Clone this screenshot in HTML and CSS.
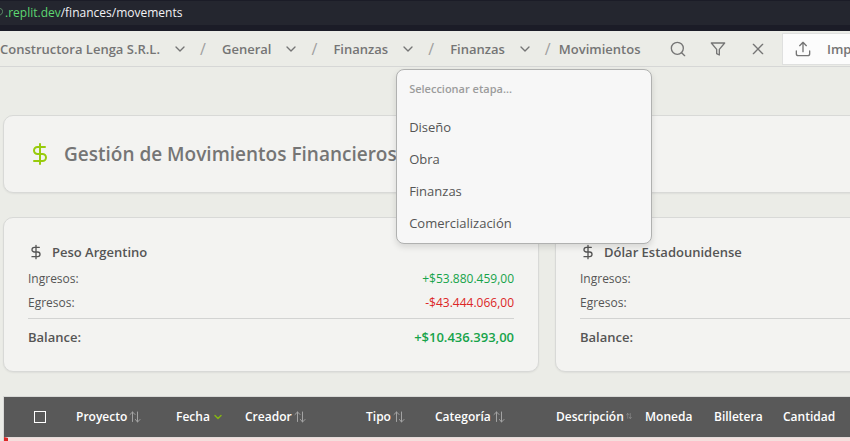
FILE: index.html
```html
<!DOCTYPE html>
<html lang="es">
<head>
<meta charset="utf-8">
<meta name="viewport" content="width=device-width, initial-scale=1">
<title>Movimientos</title>
<link rel="stylesheet" href="styles.css">
</head>
<body>
<svg class="defs" aria-hidden="true">
  <symbol id="chevron" viewBox="0 0 24 24"><path d="m6 9 6 6 6-6"/></symbol>
  <symbol id="dollar" viewBox="0 0 24 24"><path d="M12 2v20M17 5H9.500a3.500 3.500 0 0 0 0 7h5a3.500 3.500 0 0 1 0 7H6"/></symbol>
  <symbol id="sort" viewBox="0 0 12 12"><path d="M3.500 10.500V1M1 3.500 3.500 1 6 3.500M8.500 1v10M6.500 8.500l2 2.500 2.500-2.500"/></symbol>
</svg>
<div class="browser">
  <div class="address">
    <svg class="site-icon" viewBox="0 0 5 12" aria-hidden="true"><path d="M0 1.500C1.500 1.500 2.500 2.500 2.500 4.500S1.500 7.500 0 8"/></svg>
    <span><span class="domain">.replit.dev</span>/finances/movements</span>
  </div>
</div>
<header class="topbar">
  <nav class="crumbs" aria-label="Ruta">
    <button class="crumb" type="button">Constructora Lenga S.R.L.<svg class="icon"><use href="#chevron"/></svg></button>
    <span class="slash">/</span>
    <button class="crumb" type="button">General<svg class="icon"><use href="#chevron"/></svg></button>
    <span class="slash">/</span>
    <button class="crumb" type="button">Finanzas<svg class="icon"><use href="#chevron"/></svg></button>
    <span class="slash">/</span>
    <div class="stage">
      <button class="crumb" type="button" aria-expanded="true">Finanzas<svg class="icon"><use href="#chevron"/></svg></button>
      <div class="menu" role="menu">
        <p class="menu-label">Seleccionar etapa...</p>
        <button class="menu-item" type="button" role="menuitem">Diseño</button>
        <button class="menu-item" type="button" role="menuitem">Obra</button>
        <button class="menu-item" type="button" role="menuitem">Finanzas</button>
        <button class="menu-item" type="button" role="menuitem">Comercialización</button>
      </div>
    </div>
    <span class="slash">/</span>
    <a class="current" href="#">Movimientos</a>
  </nav>
  <div class="actions">
    <button class="tool" type="button" aria-label="Buscar"><svg class="icon" viewBox="0 0 24 24"><circle cx="11" cy="11" r="9"/><path d="m22 22-4.500-4.500"/></svg></button>
    <button class="tool" type="button" aria-label="Filtrar"><svg class="icon" viewBox="0 0 24 24"><path d="M22 3H2l8 9.500V19l4 2v-8.500z"/></svg></button>
    <button class="tool" type="button" aria-label="Cerrar"><svg class="icon" viewBox="0 0 24 24"><path d="M19 5 5 19M5 5l14 14"/></svg></button>
    <button class="import" type="button"><svg class="icon" viewBox="0 0 24 24"><path d="M2 15v4a3 3 0 0 0 3 3h14a3 3 0 0 0 3-3v-4M17 7l-5-5-5 5M12 2v14"/></svg>Importar</button>
  </div>
</header>
<main class="content">
  <section class="card heading">
    <svg class="icon"><use href="#dollar"/></svg>
    <h1>Gestión de Movimientos Financieros</h1>
  </section>
  <div class="balances">
    <section class="card balance">
      <h2><svg class="icon"><use href="#dollar"/></svg>Peso Argentino</h2>
      <dl>
        <div class="line"><dt>Ingresos:</dt><dd class="in">+$53.880.459,00</dd></div>
        <div class="line"><dt>Egresos:</dt><dd class="out">-$43.444.066,00</dd></div>
        <div class="line total"><dt>Balance:</dt><dd class="in">+$10.436.393,00</dd></div>
      </dl>
    </section>
    <section class="card balance">
      <h2><svg class="icon"><use href="#dollar"/></svg>Dólar Estadounidense</h2>
      <dl>
        <div class="line"><dt>Ingresos:</dt></div>
        <div class="line"><dt>Egresos:</dt></div>
        <div class="line total"><dt>Balance:</dt></div>
      </dl>
    </section>
  </div>
  <table class="movements">
    <colgroup><col class="c-check"><col class="c-100"><col class="c-69"><col class="c-121"><col class="c-69"><col class="c-121"><col class="c-89"><col class="c-69"><col class="c-69"><col></colgroup>
    <thead>
      <tr>
        <th><input type="checkbox" aria-label="Seleccionar todo"></th>
        <th>Proyecto<svg class="sort"><use href="#sort"/></svg></th>
        <th>Fecha<svg class="sort active"><use href="#chevron"/></svg></th>
        <th>Creador<svg class="sort"><use href="#sort"/></svg></th>
        <th>Tipo<svg class="sort"><use href="#sort"/></svg></th>
        <th>Categoría<svg class="sort"><use href="#sort"/></svg></th>
        <th>Descripción<svg class="sort small" viewBox="0 0 12 12"><use href="#sort"/></svg></th>
        <th>Moneda</th>
        <th>Billetera</th>
        <th>Cantidad</th>
      </tr>
    </thead>
    <tbody><tr class="expense"><td colspan="10"></td></tr></tbody>
  </table>
</main>
</body>
</html>
```
FILE: styles.css
```css
* { box-sizing: border-box; }
html { height: 100%; overflow: hidden; }
body {
  margin: 0;
  height: 100%;
  overflow: hidden;
  background: #ebece7;
  color: #555;
  font: 13px/20px "Open Sans", "Noto Sans", sans-serif;
}
h1, h2, p, dl, dd { margin: 0; }
button { border: 0; background: none; padding: 0; color: inherit; font: inherit; cursor: pointer; }
.defs { position: absolute; width: 0; height: 0; }
.icon, .sort, .site-icon {
  flex: none;
  fill: none;
  stroke: currentColor;
  stroke-width: 2;
  stroke-linecap: round;
  stroke-linejoin: round;
}
.icon { width: 16px; height: 16px; }

.browser { height: 31px; background: #1b1c27; padding-top: 1px; }
.address {
  display: flex;
  align-items: center;
  height: 24px;
  background: #24262f;
  color: #f2f2f5;
  font-size: 12px;
}
.site-icon { width: 5px; height: 12px; stroke: #5c8d68; stroke-width: 1; }
.domain { color: #5ed671; }

.topbar {
  display: flex;
  align-items: center;
  height: 36px;
  border-bottom: 1px solid #d6d7d6;
  color: #757575;
  font-weight: 600;
}
.crumbs { display: flex; flex: none; align-items: center; width: 662px; white-space: nowrap; }
.crumb { display: flex; align-items: center; gap: 12px; }
.slash { width: 6px; margin: 0 16px 0 12px; color: #a0a0a0; font-size: 16px; font-weight: 400; }
.stage { position: relative; }
.stage + .slash { margin-right: 8px; }
.current { color: inherit; text-decoration: none; }
.actions { display: flex; flex: none; align-items: center; gap: 8px; }
.tool { display: grid; place-items: center; width: 32px; height: 32px; }
.import {
  display: flex;
  align-items: center;
  gap: 16px;
  height: 32px;
  padding: 0 12px;
  border: 1px solid #dfe0df;
  background: #fcfcfc;
}

.menu {
  position: absolute;
  z-index: 2;
  top: 30px;
  left: -54px;
  width: 256px;
  padding: 4px;
  border: 1px solid #b0b1b0;
  border-radius: 8px;
  background: #f7f7f7;
  box-shadow: 0 3px 6px rgba(0, 0, 0, 0.12);
  color: #555;
  font-weight: 400;
}
.menu-label { padding: 5px 8px 12px; color: #9c9c9c; font-size: 11px; font-weight: 600; }
.menu-item { display: block; width: 100%; height: 32px; padding: 0 8px; text-align: left; }

.content { margin-left: 3px; padding-top: 48px; }
.card {
  border: 1px solid #d8d9d7;
  border-radius: 10px;
  background: #f3f3f1;
  box-shadow: 0 1px 2px rgba(0, 0, 0, 0.06);
}
.heading {
  display: flex;
  align-items: center;
  gap: 12px;
  min-width: 1088px;
  height: 78px;
  padding: 0 24px;
}
.heading .icon { width: 24px; height: 24px; color: #98cb0c; }
h1 { color: #757575; font-size: 19px; font-weight: 600; line-height: 28px; }
.balances {
  display: grid;
  grid-template-columns: repeat(2, minmax(536px, 1fr));
  gap: 16px;
  margin: 24px 0;
}
.balance { padding: 24px 24px 16px; }
h2 { display: flex; align-items: center; gap: 8px; font-size: 13px; font-weight: 600; line-height: 20px; }
.line { display: flex; justify-content: space-between; height: 24px; font-size: 12px; line-height: 24px; }
dl { padding-top: 5px; }
.total {
  height: 37px;
  margin-top: 3px;
  border-top: 1px solid #d2d3d2;
  font-size: 13px;
  font-weight: 600;
  line-height: 37px;
}
.in { color: #16a34a; }
.out { color: #dc2626; }
.line:not(.total) dd { font-weight: 500; }

.movements { width: 1088px; table-layout: fixed; border: 1px solid #d8d9d7; border-collapse: separate; border-spacing: 0; }
.c-check { width: 64px; }
.c-100 { width: 100px; }
.c-69 { width: 69px; }
.c-121 { width: 121px; }
.c-89 { width: 89px; }
th {
  height: 40px;
  padding: 0 0 0 8px;
  background: #595959;
  color: #fff;
  font-size: 12px;
  font-weight: 600;
  text-align: left;
  white-space: nowrap;
}
th:first-child { padding-left: 30px; }
th input { display: block; width: 12px; height: 12px; margin: 0; appearance: none; border: 1px solid #fff; }
.sort { width: 12px; height: 12px; margin-left: 2px; color: #a3a3a3; stroke-width: 1; vertical-align: -2px; }
.sort.active { color: #84b414; stroke-width: 3; }
.sort.small { width: 6px; height: 6px; vertical-align: 2px; }
.expense td { height: 40px; padding: 0; border-top: 1px solid #e5dcda; border-left: 4px solid #dc2626; background: #f4dfdd; }
```
